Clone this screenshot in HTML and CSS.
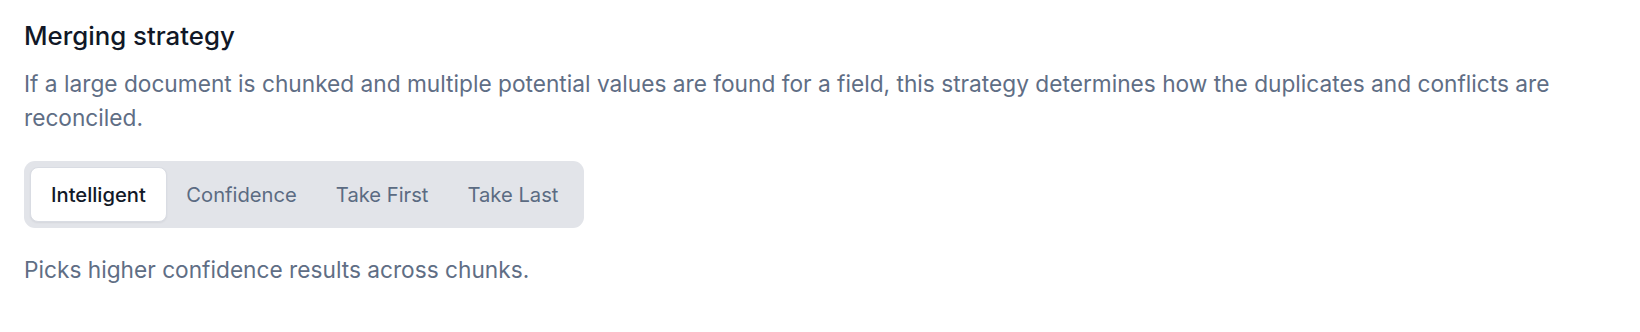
FILE: index.html
```html
<!DOCTYPE html>
<html lang="en">
<head>
    <meta charset="UTF-8">
    <title>Merging strategy</title>
    <link rel="stylesheet" href="styles.css">
</head>
<body>

    <div class="setting">
        <h2 class="setting-title">Merging strategy</h2>
        <p class="setting-desc">
            If a large document is chunked and multiple potential values are found for a field, this strategy determines how the duplicates and conflicts are reconciled.
        </p>

        <div class="segmented">
            <button class="segment active" onclick="pick(0)">Intelligent</button>
            <button class="segment" onclick="pick(1)">Confidence</button>
            <button class="segment" onclick="pick(2)">Take First</button>
            <button class="segment" onclick="pick(3)">Take Last</button>
        </div>

        <p class="setting-hint" id="hint">Picks higher confidence results across chunks.</p>
    </div>

    <script>
        let hints = [
            "Picks higher confidence results across chunks.",
            "Keeps the value with the highest confidence score.",
            "Keeps the first value found.",
            "Keeps the last value found."
        ];

        function pick(index) {
            let buttons = document.querySelectorAll('.segment');
            buttons.forEach(function (b, i) {
                b.classList.toggle('active', i === index);
            });
            document.getElementById('hint').textContent = hints[index];
        }
    </script>
</body>
</html>
```

FILE: styles.css
```css
body {
    margin: 0;
    font-family: 'Inter', 'Noto Sans', sans-serif;
    background-color: #fff;
    color: #0f172a;
}

.setting {
    padding: 18px 24px;
}

.setting-title {
    margin: 0;
    font-size: 25.8px;
    line-height: 36px;
    font-weight: 500;
    color: #111827;
}

.setting-desc {
    margin: 13px 0 0;
    font-size: 22.7px;
    line-height: 34px;
    color: #5f6e85;
}

.segmented {
    display: inline-flex;
    margin-top: 26px;
    padding: 6px;
    background-color: #e2e4e9;
    border-radius: 11px;
}

.segment {
    font-family: inherit;
    font-size: 20.2px;
    line-height: 28px;
    font-weight: 400;
    padding: 12.5px 18.5px;
    border: 1px solid transparent;
    border-radius: 8px;
    background: transparent;
    color: #5b6b82;
    cursor: pointer;
}

.segment.active {
    padding: 12.5px 20px;
    background-color: #fff;
    color: #111827;
    font-weight: 500;
    border-color: #d9dce3;
    box-shadow: 0 1px 2px rgba(15, 23, 42, 0.06);
}

.setting-hint {
    margin: 25px 0 0;
    font-size: 22.7px;
    line-height: 34px;
    color: #5f6e85;
}
```
